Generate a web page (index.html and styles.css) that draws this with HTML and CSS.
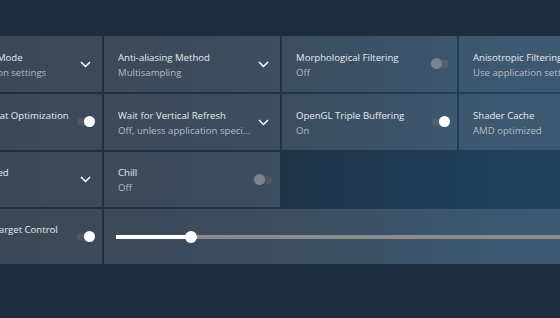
FILE: index.html
```html
<!DOCTYPE html>
<html lang="en">
<head>
  <meta charset="UTF-8" />
  <title>Global Graphics</title>
  <link rel="stylesheet" href="styles.css">
</head>
<body>
  <div class="page">
    <div class="grid">
      <div class="card">
        <div class="text">
          <div class="title">Anti-aliasing Mode</div>
          <div class="sub">Use application settings</div>
        </div>
        <svg class="chev" width="11" height="7" viewBox="0 0 11 7"><path d="M1 1l4.5 4.5L10 1" fill="none" stroke="#fff" stroke-width="1.5"/></svg>
      </div>
      <div class="card">
        <div class="text">
          <div class="title">Anti-aliasing Method</div>
          <div class="sub">Multisampling</div>
        </div>
        <svg class="chev" width="11" height="7" viewBox="0 0 11 7"><path d="M1 1l4.5 4.5L10 1" fill="none" stroke="#fff" stroke-width="1.5"/></svg>
      </div>
      <div class="card">
        <div class="text">
          <div class="title">Morphological Filtering</div>
          <div class="sub">Off</div>
        </div>
        <div class="toggle"><span class="knob"></span></div>
      </div>
      <div class="card">
        <div class="text">
          <div class="title">Anisotropic Filtering Mode</div>
          <div class="sub">Use application settings</div>
        </div>
      </div>

      <div class="card">
        <div class="text">
          <div class="title">Surface Format Optimization</div>
          <div class="sub"></div>
        </div>
        <div class="toggle on"><span class="knob"></span></div>
      </div>
      <div class="card">
        <div class="text">
          <div class="title">Wait for Vertical Refresh</div>
          <div class="sub">Off, unless application speci...</div>
        </div>
        <svg class="chev" width="11" height="7" viewBox="0 0 11 7"><path d="M1 1l4.5 4.5L10 1" fill="none" stroke="#fff" stroke-width="1.5"/></svg>
      </div>
      <div class="card">
        <div class="text">
          <div class="title">OpenGL Triple Buffering</div>
          <div class="sub">On</div>
        </div>
        <div class="toggle on"><span class="knob"></span></div>
      </div>
      <div class="card">
        <div class="text">
          <div class="title">Shader Cache</div>
          <div class="sub">AMD optimized</div>
        </div>
      </div>

      <div class="card">
        <div class="text">
          <div class="title">AMD optimized</div>
          <div class="sub"></div>
        </div>
        <svg class="chev" width="11" height="7" viewBox="0 0 11 7"><path d="M1 1l4.5 4.5L10 1" fill="none" stroke="#fff" stroke-width="1.5"/></svg>
      </div>
      <div class="card">
        <div class="text">
          <div class="title">Chill</div>
          <div class="sub">Off</div>
        </div>
        <div class="toggle"><span class="knob"></span></div>
      </div>
      <div class="empty"></div>
      <div class="empty"></div>

      <div class="card">
        <div class="text">
          <div class="title">Frame Rate Target Control</div>
          <div class="sub"></div>
        </div>
        <div class="toggle on"><span class="knob"></span></div>
      </div>
      <div class="card wide">
        <div class="slider">
          <div class="fill" style="width: 75px"></div>
          <span class="thumb" style="left: 75px"></span>
        </div>
      </div>
    </div>
  </div>
</body>
</html>
```

FILE: styles.css
```css
body { margin: 0; background: #1e2d3d; font-family: "Open Sans", "Noto Sans", sans-serif; overflow: hidden; }
.page { height: 318px; padding-top: 36px; box-sizing: border-box; }
.grid {
  display: grid;
  grid-template-columns: 176px 176px 175px 176px;
  grid-template-rows: 56px 56px 55px 55px;
  gap: 2px;
  margin-left: -74px;
  width: 710px;
  background: linear-gradient(90deg, #1f2d3e 0%, #1f2d3e 12%, #1f3448 50%, #1f3850 62%, #21405c 80%, #22445f 100%);
}
.card {
  background: rgba(255, 255, 255, 0.13);
  display: flex;
  align-items: center;
  padding: 0 8px 0 14px;
  box-sizing: border-box;
  min-width: 0;
}
.text { flex: 1; min-width: 0; padding-top: 1px; }
.title { color: #e6e9ec; font-size: 9.6px; line-height: 15px; white-space: nowrap; overflow: hidden; }
.sub { color: #b4bbc4; font-size: 9.6px; line-height: 15px; height: 15px; white-space: nowrap; overflow: hidden; }
.chev { margin-right: 3px; flex: none; }
.toggle {
  position: relative;
  width: 17px;
  height: 8px;
  border-radius: 4px;
  background: rgba(255, 255, 255, 0.08);
  flex: none;
}
.knob {
  position: absolute;
  top: -2px;
  left: -1px;
  width: 11px;
  height: 11px;
  border-radius: 50%;
  background: #7d838b;
}
.toggle.on .knob { left: auto; right: -1px; background: #fff; }
.wide { grid-column: span 3; padding: 0 0 0 12px; }
.slider { position: relative; flex: 1; height: 4px; background: #8a8a8a; }
.fill { height: 4px; background: #fff; }
.thumb {
  position: absolute;
  top: -4px;
  width: 12px;
  height: 12px;
  margin-left: -6px;
  border-radius: 50%;
  background: #fff;
}
```
